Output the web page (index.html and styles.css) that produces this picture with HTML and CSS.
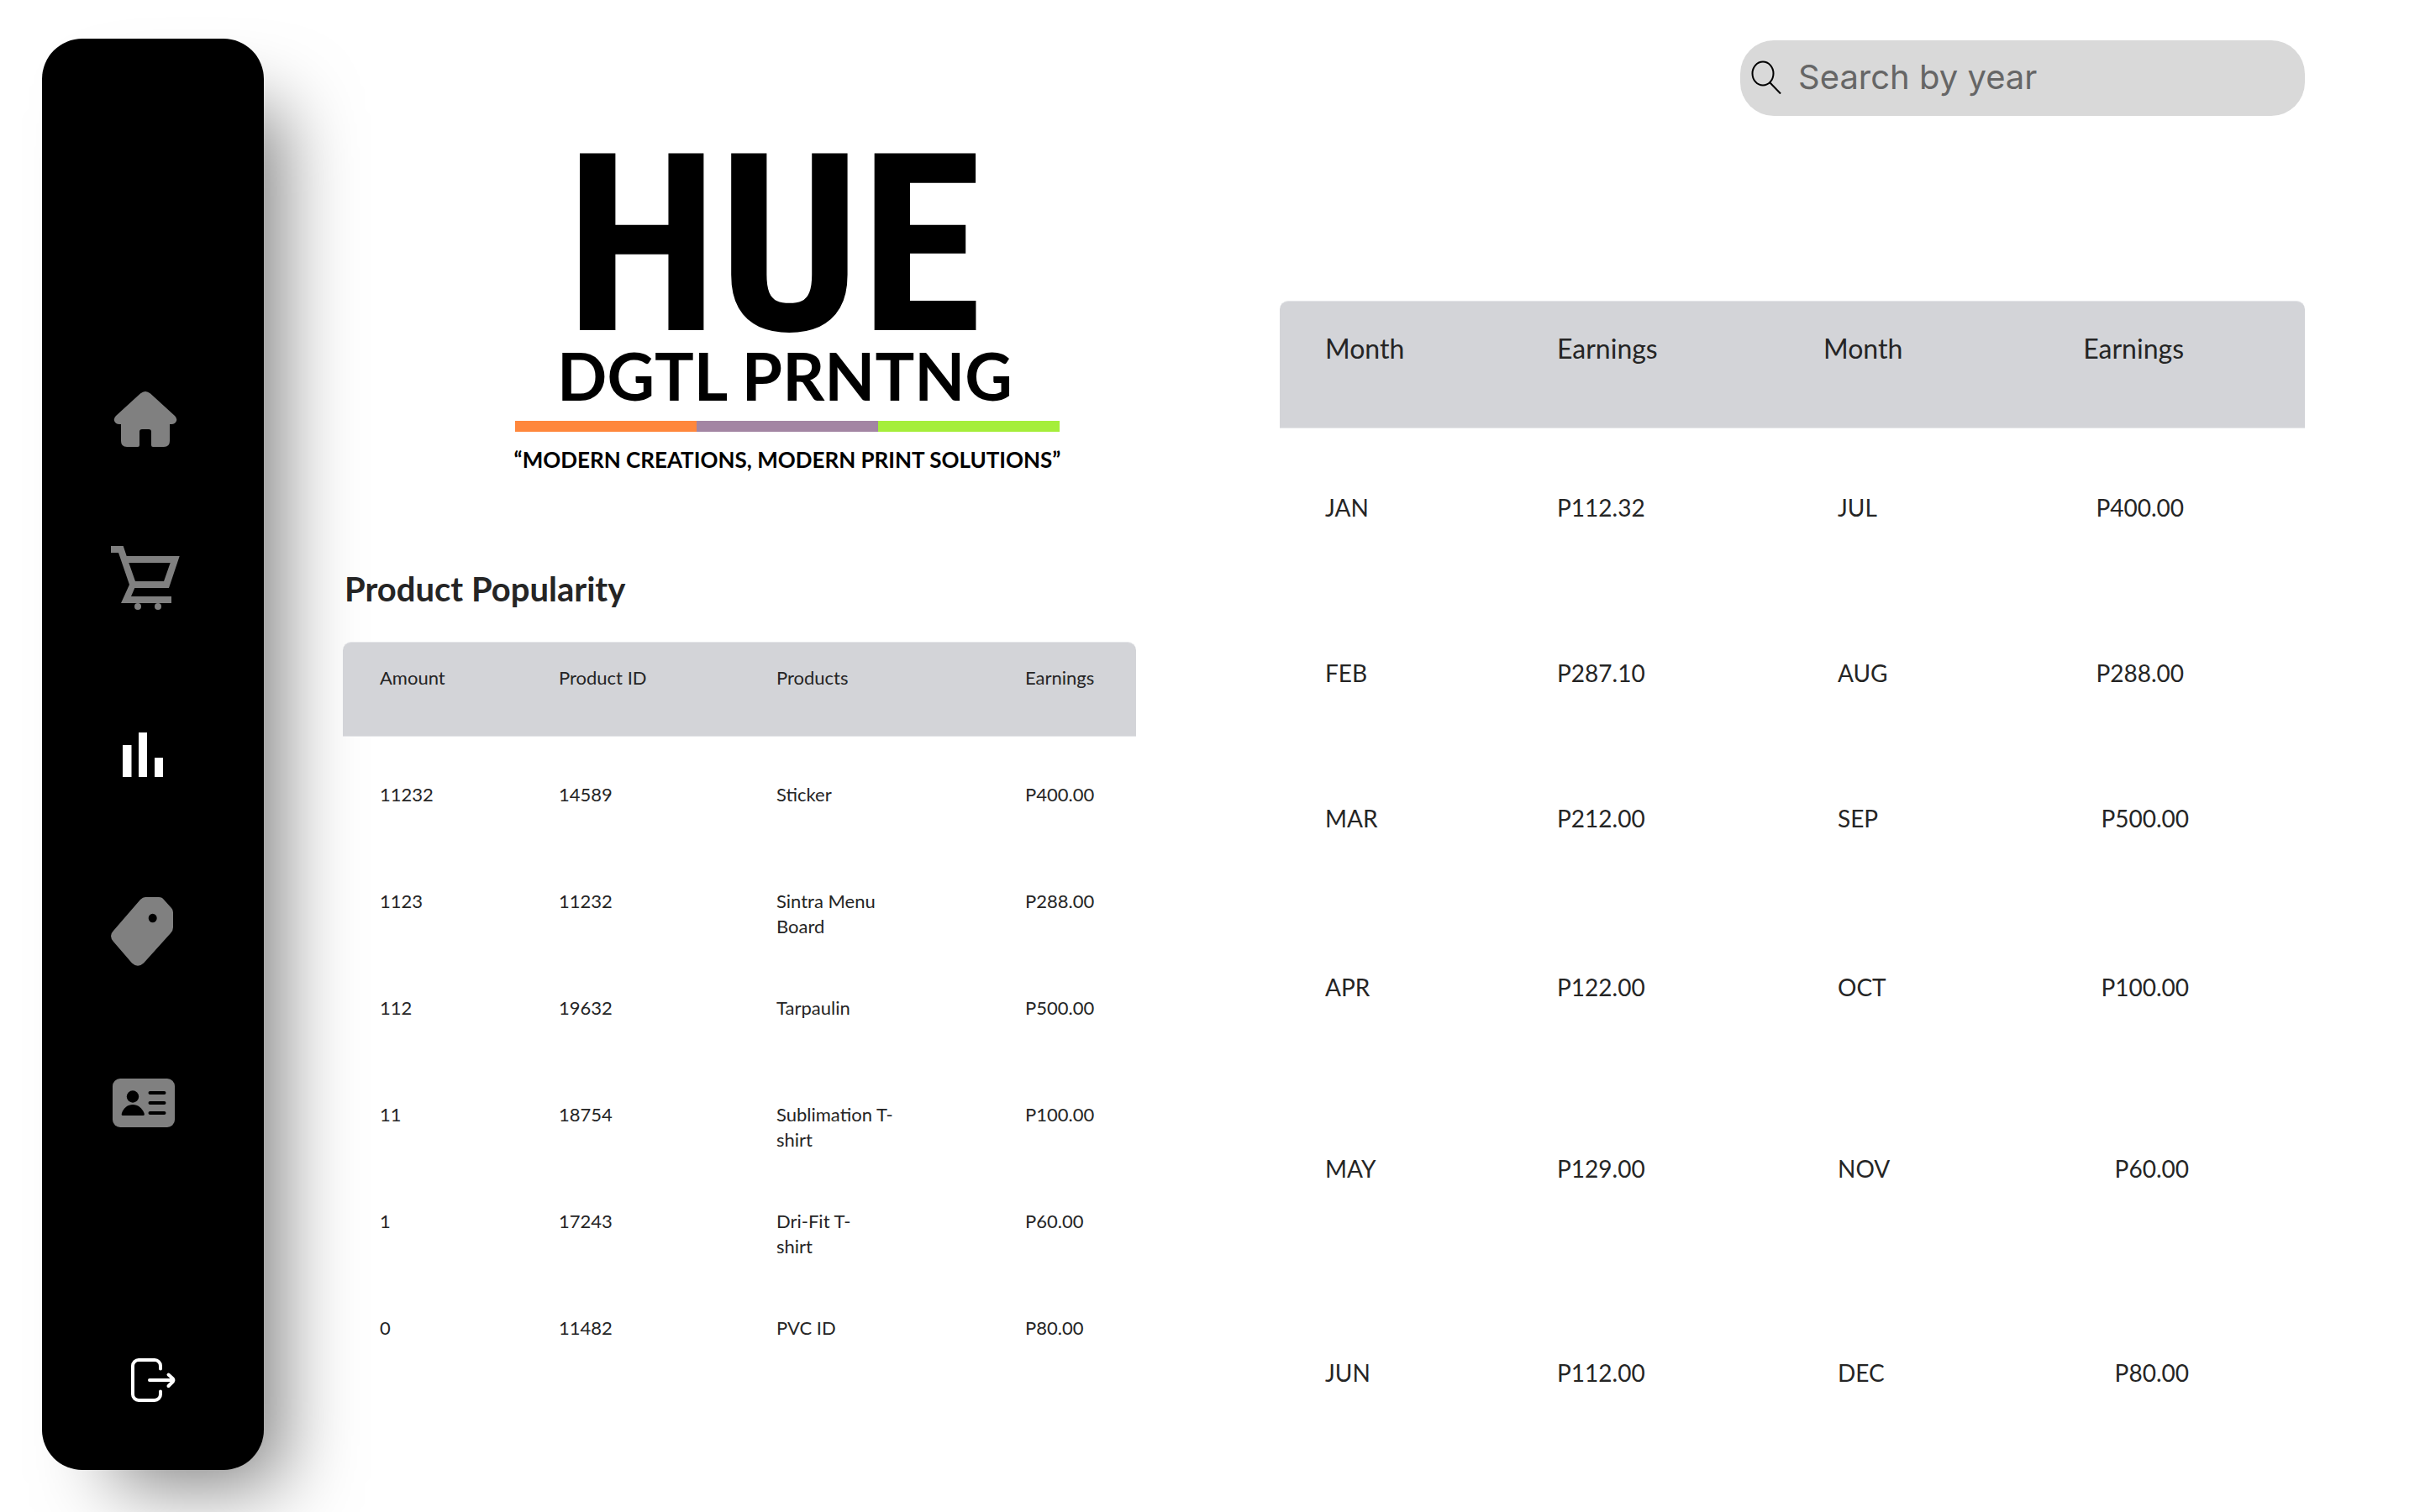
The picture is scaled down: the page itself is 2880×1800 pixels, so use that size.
FILE: index.html
```html
<!DOCTYPE html>
<html lang="en">
<head>
<meta charset="utf-8">
<title>HUE DGTL PRNTNG</title>
<link rel="stylesheet" href="styles.css">
</head>
<body class="page">
<aside class="sidebar">
  <nav class="nav" aria-label="Main">
    <a class="nav-link nav-home" href="#home" aria-label="Home">
      <svg class="icon" viewBox="0 0 84 84"><path d="M35 11.500Q41 6.500 47 11.500L76 38Q79 41 78 44Q76.500 48 72 48H70V68Q70 75 63 75H50Q48 75 48 73V57Q48 54 45 54H37Q34 54 34 57V73Q34 75 32 75H19Q12 75 12 68V48H10Q5.500 48 4 44Q3 41 6 38Z"/></svg>
    </a>
    <a class="nav-link nav-cart" href="#orders" aria-label="Orders">
      <svg class="icon" viewBox="0 0 84 84"><path fill-rule="evenodd" d="M0 4H14.700L18.700 16H81.700L69 54H28.300L24 64H72V72H12L22 50L9 12H0ZM21.300 24L29 46H63L70.700 24Z"/><circle cx="32" cy="76" r="4"/><circle cx="56" cy="76" r="4"/></svg>
    </a>
    <a class="nav-link nav-stats active" href="#stats" aria-label="Statistics" aria-current="page">
      <svg class="icon" viewBox="0 0 84 84"><path d="M14 31H24.500V69H14ZM33 16H43V69H33ZM52 46H62V69H52Z"/></svg>
    </a>
    <a class="nav-link nav-tags" href="#products" aria-label="Products">
      <svg class="icon" viewBox="0 0 84 84"><path fill-rule="evenodd" d="M41 1H57Q61 1 63 4L72 14Q74 16 74 19V37Q74 41 71 44L39 79.500Q32 86 25 79.500L3 54Q-3 47 3 41L35 4Q38 1 41 1ZM49.700 20.800a5 5.200 0 1 0 0 10.400a5 5.200 0 1 0 0-10.400Z"/></svg>
    </a>
    <a class="nav-link nav-staff" href="#staff" aria-label="Staff">
      <svg class="icon" viewBox="0 0 84 84"><rect x="2" y="13" width="74" height="58" rx="9"/><g fill="#000"><circle cx="26" cy="34.500" r="7.200"/><path d="M14 57Q12 57 13 54C15 48 20 44 26 44S37 48 39.500 54Q40.500 57 38.500 57Z"/></g><path d="M46.500 30H63.500M46.500 42H63.500M46.500 54H63.500" stroke="#000" stroke-width="4" stroke-linecap="round"/></svg>
    </a>
  </nav>
  <button class="logout" type="button" aria-label="Log out">
    <svg class="logout-icon" viewBox="0 0 52 52"><path d="M35 12.500V9a7 7 0 0 0-7-7H9a7 7 0 0 0-7 7V43a7 7 0 0 0 7 7H28a7 7 0 0 0 7-7V39.500M22 26H49M44.500 19.500L50 24.500Q51 26 50 27.500L44.500 33"/></svg>
  </button>
</aside>

<main class="main">
  <section class="products">
    <div class="logo">
      <div class="logo-name">HUE</div>
      <div class="logo-sub">DGTL PRNTNG</div>
      <div class="logo-bar"><span class="orange"></span><span class="purple"></span><span class="green"></span></div>
      <div class="logo-tag">“MODERN CREATIONS, MODERN PRINT SOLUTIONS”</div>
    </div>
    <h1 class="title">Product Popularity</h1>
    <table class="table popularity">
      <colgroup><col class="p-amount"><col class="p-id"><col class="p-name"><col class="p-earn"></colgroup>
      <thead><tr><th>Amount</th><th>Product ID</th><th>Products</th><th>Earnings</th></tr></thead>
      <tbody>
        <tr><td>11232</td><td>14589</td><td>Sticker</td><td>P400.00</td></tr>
        <tr><td>1123</td><td>11232</td><td>Sintra Menu<br>Board</td><td>P288.00</td></tr>
        <tr><td>112</td><td>19632</td><td>Tarpaulin</td><td>P500.00</td></tr>
        <tr><td>11</td><td>18754</td><td>Sublimation T-<br>shirt</td><td>P100.00</td></tr>
        <tr><td>1</td><td>17243</td><td>Dri-Fit T-<br>shirt</td><td>P60.00</td></tr>
        <tr><td>0</td><td>11482</td><td>PVC ID</td><td>P80.00</td></tr>
      </tbody>
    </table>
  </section>

  <section class="earnings">
    <form class="search" role="search">
      <label class="search-label" for="year" aria-label="Search by year">
        <svg class="search-icon" viewBox="0 0 36 40"><ellipse cx="14" cy="15.500" rx="12.500" ry="14"/><path d="M22.500 26.500L35 39.500"/></svg>
      </label>
      <input class="search-input" id="year" type="text" placeholder="Search by year">
    </form>
    <table class="table monthly">
      <colgroup><col class="m-month"><col class="m-earn"><col class="m-month2"><col class="m-earn2"></colgroup>
      <thead><tr><th>Month</th><th>Earnings</th><th>Month</th><th>Earnings</th></tr></thead>
      <tbody>
        <tr class="h-197"><td>JAN</td><td>P112.32</td><td>JUL</td><td>P400.00</td></tr>
        <tr class="h-173"><td>FEB</td><td>P287.10</td><td>AUG</td><td>P288.00</td></tr>
        <tr class="h-201"><td>MAR</td><td>P212.00</td><td>SEP</td><td>P500.00</td></tr>
        <tr class="h-216"><td>APR</td><td>P122.00</td><td>OCT</td><td>P100.00</td></tr>
        <tr class="h-243"><td>MAY</td><td>P129.00</td><td>NOV</td><td>P60.00</td></tr>
        <tr><td>JUN</td><td>P112.00</td><td>DEC</td><td>P80.00</td></tr>
      </tbody>
    </table>
  </section>
</main>
</body>
</html>
```
FILE: styles.css
```css
* { box-sizing: border-box; }

.page {
  margin: 0;
  min-height: 100vh;
  display: flex;
  align-items: stretch;
  background: #fff;
  color: #252525;
  font-family: Lato, "Open Sans", sans-serif;
  overflow-x: hidden;
}

/* Sidebar */
.sidebar {
  flex: none;
  width: 264px;
  margin: 46px 0 50px 50px;
  padding: 362px 0 81px;
  display: flex;
  flex-direction: column;
  background: #000;
  border-radius: 48px;
  box-shadow: 52px 50px 90px -32px rgba(0, 0, 0, 0.5);
}
.nav { display: flex; flex-direction: column; }
.nav-link {
  display: flex;
  align-items: center;
  padding-left: 82px;
  color: #808080;
}
.nav-link.active { color: #fff; }
.nav-home { height: 182px; }
.nav-cart { height: 196px; }
.nav-stats { height: 224px; }
.nav-tags { height: 198px; }
.nav-staff { height: 210px; }
.icon { width: 84px; height: 84px; fill: currentColor; }
.logout {
  margin: auto auto 0;
  padding: 0;
  border: 0;
  background: none;
  line-height: 0;
}
.logout-icon {
  width: 52px;
  height: 52px;
  fill: none;
  stroke: #fff;
  stroke-width: 4;
  stroke-linecap: round;
  stroke-linejoin: round;
  overflow: visible;
}

/* Content */
.main {
  flex: 1;
  min-width: 0;
  display: grid;
  grid-template-columns: 944fr 1220fr;
  gap: 171px;
  padding: 48px 137px 48px 94px;
}

/* Logo */
.logo {
  width: 648px;
  margin: 133px 0 0 205px;
  color: #000;
  font-weight: 700;
  text-align: center;
  white-space: nowrap;
}
.logo-name {
  height: 222px;
  padding-right: 32px;
  font-family: "Roboto Condensed", "Open Sans Condensed", Roboto, sans-serif;
  font-size: 296px;
  line-height: 222px;
}
.logo-sub { height: 98px; padding-right: 6px; font-size: 78px; line-height: 88px; }
.logo-bar { display: flex; height: 13px; }
.logo-bar span { flex: 1; }
.orange { background: #ff873c; }
.purple { background: #a385a3; }
.green { background: #a5ee3a; }
.logo-tag {
  display: flex;
  justify-content: center;
  margin-top: 17px;
  font-size: 26px;
  line-height: 32px;
}

.title {
  margin: 114px 0 0 2px;
  font-size: 40px;
  line-height: 48px;
  font-weight: 700;
}

/* Tables */
.table {
  width: 100%;
  table-layout: fixed;
  border-collapse: separate;
  border-spacing: 0;
}
.table th, .table td {
  padding: 0;
  text-align: left;
  vertical-align: top;
  font-weight: 400;
}
.table th {
  background: #d3d4d8;
  border: solid #e4e5e8;
  border-width: 1px 0;
}
.table th:first-child { border-top-left-radius: 10px; }
.table th:last-child { border-top-right-radius: 10px; }

.popularity { margin-top: 39px; font-size: 22px; line-height: 30px; }
.popularity th { height: 113px; padding-top: 27px; }
.popularity td { height: 127px; padding-top: 54px; }
.popularity th:first-child, .popularity td:first-child { padding-left: 44px; }
.p-amount { width: 257px; }
.p-id { width: 259px; }
.p-name { width: 296px; }
.p-earn { width: 132px; }

.monthly { margin-top: 220px; font-size: 28px; line-height: 34px; }
.monthly th { height: 152px; padding-top: 37px; font-size: 32px; line-height: 38px; }
.monthly td { padding-top: 77px; }
.monthly th:first-child, .monthly td:first-child { padding-left: 54px; }
.monthly td:nth-child(3) { padding-left: 17px; }
.monthly th:last-child, .monthly td:last-child { padding-right: 144px; text-align: right; }
.monthly tr:nth-child(n+3) td:last-child { padding-right: 138px; }
.m-month { width: 330px; }
.m-earn { width: 317px; }
.m-month2 { width: 160px; }
.m-earn2 { width: 413px; }
.h-197 { height: 197px; }
.h-173 { height: 173px; }
.h-201 { height: 201px; }
.h-216 { height: 216px; }
.h-243 { height: 243px; }

/* Search */
.search {
  display: flex;
  align-items: center;
  gap: 20px;
  width: 672px;
  height: 90px;
  margin-left: auto;
  padding: 0 24px 2px 13px;
  background: #d9d9d9;
  border-radius: 40px;
}
.search-label { display: flex; }
.search-icon {
  width: 36px;
  height: 40px;
  fill: none;
  stroke: #000;
  stroke-width: 2;
}
.search-input {
  flex: 1;
  min-width: 0;
  padding: 0;
  border: 0;
  outline: 0;
  background: none;
  color: #333;
  font: 400 40px/48px Inter, sans-serif;
}
.search-input::placeholder { color: #666; opacity: 1; }
```
